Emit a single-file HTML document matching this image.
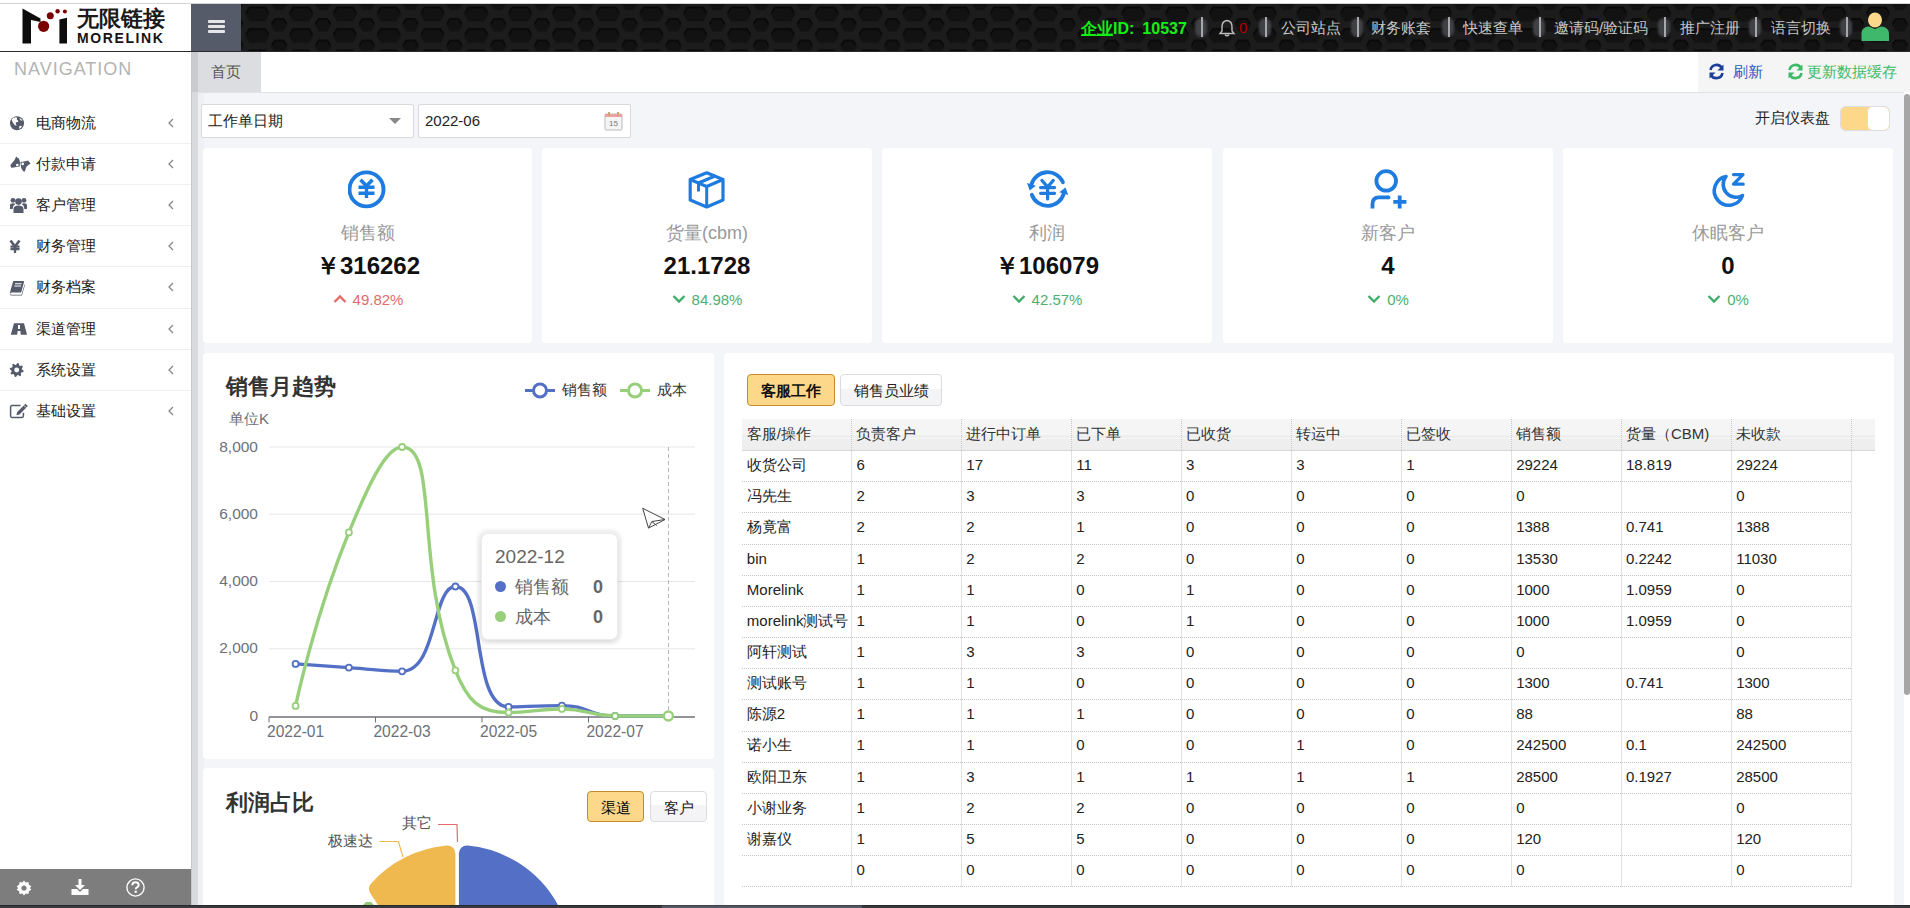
<!DOCTYPE html>
<html><head><meta charset="utf-8">
<style>
*{margin:0;padding:0;box-sizing:border-box}
html,body{width:1910px;height:908px;overflow:hidden;background:#fff;font-family:"Liberation Sans",sans-serif;color:#333}
.a{position:absolute}
#topline{left:0;top:3px;width:1910px;height:1px;background:#d4d4d4}
#header{left:0;top:4px;width:1910px;height:47px;background:#1b1b1b}
#hline{left:0;top:51px;width:1910px;height:1px;background:#2a2a2a}
#logo{left:0;top:4px;width:191px;height:47px;background:#fff}
#burger{left:191px;top:4px;width:50px;height:47px;background:#555b69}
.bar{position:absolute;left:17px;width:17px;height:3px;background:#e6e6e6;border-radius:1px}
#side{left:0;top:52px;width:191px;height:853px;background:#fff}
#nav{left:14px;top:59px;font-size:18px;color:#b4b4b4;letter-spacing:1px}
.mi{position:absolute;left:0;width:191px;height:41px}
.mi .t{position:absolute;left:36px;top:12px;font-size:15px;color:#222;line-height:17px}
.mi .ch{position:absolute;left:167px;top:12.7px}
.mi .ic{position:absolute;left:10px;top:13px}
.div{position:absolute;left:0;width:191px;height:1px;background:#edeff3}
#sfoot{left:0;top:869px;width:191px;height:36px;background:#7d7d7d}
#bottombar{left:0;top:905px;width:1910px;height:3px;background:#37393e}
#sstrip{left:191px;top:52px;width:7px;height:853px;background:#d9dadd}
#sstrip2{left:191px;top:52px;width:1px;height:853px;background:#c6c7ca}
#content{left:198px;top:93px;width:1706px;height:812px;background:#f4f5f9}
#cstrip{left:198px;top:93px;width:6px;height:812px;background:#eef0f3}
#tabbar{left:198px;top:52px;width:1712px;height:41px;background:#fff}
#tabline{left:198px;top:92px;width:1706px;height:1px;background:#e1e2e5}
#tab1{left:198px;top:52px;width:63px;height:40px;background:#dcdde0}
#tabright{left:1698px;top:52px;width:212px;height:40px;background:#f5f5f5}
.card{position:absolute;background:#fff;border-radius:4px}
.sc{top:148px;width:330px;height:195px}
.sc .ico{position:absolute;left:145px;top:21px;width:40px;height:40px}
.sc .lbl{position:absolute;left:0;width:330px;top:74px;text-align:center;font-size:18px;color:#999;line-height:22px}
.sc .val{position:absolute;left:0;width:330px;top:104px;text-align:center;font-size:24px;font-weight:bold;color:#111;line-height:28px}
.sc .chg{position:absolute;left:0;width:330px;top:143px;text-align:center;font-size:15px;line-height:17px}
.up{color:#e36b6b}.dn{color:#4caf72}
#scroll{left:1904px;top:94px;width:6px;height:601px;background:#a6a6a6;border-radius:6px}
</style></head><body>
<div class="a" id="topline"></div>
<div class="a" id="header"></div>
<svg class="a" style="left:0;top:4px" width="1910" height="47"><defs><pattern id="hx" patternUnits="userSpaceOnUse" x="-27.40" y="-0.65" width="43.8" height="21.5"><rect width="43.8" height="21.5" fill="#1c1c1c"/><path d="M13.9 3.5 L29.9 3.5 L34.2 10.8 L29.9 18.0 L13.9 18.0 L9.6 10.8 Z M-4.4 -6.7 L4.4 -6.7 L8.4 0.0 L4.4 6.7 L-4.4 6.7 L-8.4 0.0 Z M-4.4 14.8 L4.4 14.8 L8.4 21.5 L4.4 28.2 L-4.4 28.2 L-8.4 21.5 Z M39.4 -6.7 L48.2 -6.7 L52.2 0.0 L48.2 6.7 L39.4 6.7 L35.4 0.0 Z M39.4 14.8 L48.2 14.8 L52.2 21.5 L48.2 28.2 L39.4 28.2 L35.4 21.5 Z" fill="#121212"/><path d="M10.6 9.8 L13.9 4.3 L29.9 4.3 L33.2 9.8 M-7.4 -1.0 L-4.4 -5.9 L4.4 -5.9 L7.4 -1.0 M-7.4 20.5 L-4.4 15.6 L4.4 15.6 L7.4 20.5 M36.4 -1.0 L39.4 -5.9 L48.2 -5.9 L51.2 -1.0 M36.4 20.5 L39.4 15.6 L48.2 15.6 L51.2 20.5" fill="none" stroke="#070707" stroke-width="1.6"/></pattern></defs><rect width="1910" height="47" fill="url(#hx)"/></svg>
<div class="a" id="hline"></div>
<div class="a" style="left:1081px;top:19px;font-size:16px;line-height:20px;font-weight:bold;color:#14f014;white-space:nowrap"><span style="text-decoration:underline">企业</span>ID:<span style="margin-left:8px">10537</span></div>
<div class="a" style="left:1195px;top:18px;width:12px;height:19px;border-radius:6px;background:#404146;filter:blur(1px)"></div><div class="a" style="left:1201px;top:17px;width:2px;height:20px;background:#a8a8a8"></div>
<div class="a" style="left:1259px;top:18px;width:12px;height:19px;border-radius:6px;background:#404146;filter:blur(1px)"></div><div class="a" style="left:1265px;top:17px;width:2px;height:20px;background:#a8a8a8"></div>
<div class="a" style="left:1351px;top:18px;width:12px;height:19px;border-radius:6px;background:#404146;filter:blur(1px)"></div><div class="a" style="left:1357px;top:17px;width:2px;height:20px;background:#a8a8a8"></div>
<div class="a" style="left:1442px;top:18px;width:12px;height:19px;border-radius:6px;background:#404146;filter:blur(1px)"></div><div class="a" style="left:1448px;top:17px;width:2px;height:20px;background:#a8a8a8"></div>
<div class="a" style="left:1533px;top:18px;width:12px;height:19px;border-radius:6px;background:#404146;filter:blur(1px)"></div><div class="a" style="left:1539px;top:17px;width:2px;height:20px;background:#a8a8a8"></div>
<div class="a" style="left:1658px;top:18px;width:12px;height:19px;border-radius:6px;background:#404146;filter:blur(1px)"></div><div class="a" style="left:1664px;top:17px;width:2px;height:20px;background:#a8a8a8"></div>
<div class="a" style="left:1749px;top:18px;width:12px;height:19px;border-radius:6px;background:#404146;filter:blur(1px)"></div><div class="a" style="left:1755px;top:17px;width:2px;height:20px;background:#a8a8a8"></div>
<div class="a" style="left:1840px;top:18px;width:12px;height:19px;border-radius:6px;background:#404146;filter:blur(1px)"></div><div class="a" style="left:1846px;top:17px;width:2px;height:20px;background:#a8a8a8"></div>
<svg class="a" style="left:1218px;top:19px" width="18" height="18" viewBox="0 0 18 18"><path d="M9 1.5 Q4 2 4 8 L4 12 L2 14.5 L16 14.5 L14 12 L14 8 Q14 2 9 1.5 Z" fill="none" stroke="#bbb" stroke-width="1.4"/><path d="M7 15.5 Q9 18 11 15.5" fill="none" stroke="#bbb" stroke-width="1.4"/></svg>
<div class="a" style="left:1239px;top:19px;font-size:15px;line-height:18px;color:#b00000">0</div>
<div class="a" style="left:1281px;top:19px;font-size:15px;line-height:18px;color:#c6c6c6;white-space:nowrap">公司站点</div>
<div class="a" style="left:1371px;top:19px;font-size:15px;line-height:18px;color:#c6c6c6;white-space:nowrap">财务账套</div>
<div class="a" style="left:1463px;top:19px;font-size:15px;line-height:18px;color:#c6c6c6;white-space:nowrap">快速查单</div>
<div class="a" style="left:1554px;top:19px;font-size:15px;line-height:18px;color:#c6c6c6;white-space:nowrap">邀请码/验证码</div>
<div class="a" style="left:1680px;top:19px;font-size:15px;line-height:18px;color:#c6c6c6;white-space:nowrap">推广注册</div>
<div class="a" style="left:1771px;top:19px;font-size:15px;line-height:18px;color:#c6c6c6;white-space:nowrap">语言切换</div>
<svg class="a" style="left:1861px;top:10px" width="29" height="32" viewBox="0 0 29 32"><path d="M8 5 Q14 0 20 5 L20 6 L8 6 Z" fill="#222"/><ellipse cx="14" cy="10" rx="7" ry="7.5" fill="#fcd98a"/><path d="M0.5 31 L0.5 23 Q1 17 8 16.5 L14 19 L20 16.5 Q27.5 17 28 23 L28 31 Z" fill="#3fb86b"/></svg>

<div class="a" id="logo"></div>
<div class="a" style="left:0;top:0;width:191px;height:52px">
<svg width="191" height="52" viewBox="0 0 191 52" style="position:absolute;left:0;top:0">
<path d="M22.5 8.5 L40.5 18.5 L40.5 22 L31 20 L31 43.6 L22.5 43.6 Z" fill="#0d0d0d"/>
<circle cx="43.6" cy="26.3" r="5.6" fill="#7a0000"/>
<circle cx="50.3" cy="15.8" r="3.5" fill="#7a0000"/>
<circle cx="57.6" cy="11.2" r="2.2" fill="#7a0000"/>
<circle cx="64.9" cy="11.6" r="2" fill="#7a0000"/>
<path d="M59.4 19.5 L67 17.8 L67 43.6 L59.4 43.6 Z" fill="#0d0d0d"/>
</svg>
<div class="a" style="left:77px;top:6px;font-size:22px;line-height:26px;font-weight:bold;color:#1a1a1a;letter-spacing:0px;white-space:nowrap">无限链接</div>
<div class="a" style="left:77px;top:31px;font-size:14px;line-height:15px;font-weight:bold;color:#151515;letter-spacing:1.6px;white-space:nowrap">MORELINK</div>
</div>

<div class="a" id="burger"><div class="bar" style="top:16px"></div><div class="bar" style="top:21px"></div><div class="bar" style="top:26px"></div></div>
<div class="a" id="side"></div>
<div class="a" id="nav">NAVIGATION</div>
<!--SIDE-->
<div class="mi" style="top:102px"><div class="t">电商物流</div><div class="ch"><svg width="8" height="12" viewBox="0 0 8 12"><path d="M6 2 L2 6 L6 10" fill="none" stroke="#888" stroke-width="1.3"/></svg></div></div>
<svg class="a" style="left:9px;top:115px" width="16" height="16" viewBox="0 0 16 16"><circle cx="8" cy="8.2" r="7" fill="#555b6a"/><path d="M2.6 4.6 Q4.5 2 7.5 2.2 Q8.5 3.5 7.8 4.8 Q9.5 5.2 9.3 6.8 Q8 7.5 6.8 7.2 Q6.5 9 7.6 10.5 Q6 10.8 5 9.2 Q3.3 7.2 2.6 4.6 Z M10.5 3 Q12.5 3.8 13.5 5.8 Q12 6 11.2 4.8 Z M10.5 11 Q12 10.5 13 11.2 Q12 13.2 10 13.8 Q10.2 12.5 10.5 11 Z" fill="#fff"/></svg>
<div class="mi" style="top:143px"><div class="t">付款申请</div><div class="ch"><svg width="8" height="12" viewBox="0 0 8 12"><path d="M6 2 L2 6 L6 10" fill="none" stroke="#888" stroke-width="1.3"/></svg></div></div>
<svg class="a" style="left:10px;top:153px" width="21" height="20" viewBox="0 0 21 20"><path d="M0.4 12 L2.5 9.5 L4.3 7.4 L6.2 3.6 L7.5 4.8 L8.9 5.5 L10 9 L9.7 13.6 L6 14 L3.9 14.4 L1.2 14.8 Z" fill="#555b6a"/><path d="M10.4 9 L14 8.6 L18.1 7.4 L20.5 10.5 L16.6 13.6 L15.6 16 L15 18.6 L13.1 18.2 L11.2 15.1 Z" fill="#555b6a"/><circle cx="7.3" cy="12" r="1.3" fill="#fff"/><circle cx="12.7" cy="10.9" r="1.3" fill="#fff"/></svg>
<div class="mi" style="top:184px"><div class="t">客户管理</div><div class="ch"><svg width="8" height="12" viewBox="0 0 8 12"><path d="M6 2 L2 6 L6 10" fill="none" stroke="#888" stroke-width="1.3"/></svg></div></div>
<svg class="a" style="left:10px;top:197px" width="18" height="17" viewBox="0 0 18 17"><circle cx="8.5" cy="4.6" r="3.3" fill="#555b6a"/><circle cx="3" cy="3.3" r="2.4" fill="#555b6a"/><circle cx="14" cy="3.3" r="2.4" fill="#555b6a"/><path d="M3.5 16 L3.5 12 Q3.5 8.5 8.5 8.5 Q13.5 8.5 13.5 12 L13.5 16 Z" fill="#555b6a"/><path d="M0 12 L0 8.5 Q0 6.3 3 6.3 Q4.6 6.3 5.2 7.2 Q2.8 8.5 2.8 11 L2.8 12 Z M17 12 L17 8.5 Q17 6.3 14 6.3 Q12.4 6.3 11.8 7.2 Q14.2 8.5 14.2 11 L14.2 12 Z" fill="#555b6a"/></svg>
<div class="mi" style="top:225px"><div class="t">财务管理</div><div class="ch"><svg width="8" height="12" viewBox="0 0 8 12"><path d="M6 2 L2 6 L6 10" fill="none" stroke="#888" stroke-width="1.3"/></svg></div></div>
<svg class="a" style="left:9px;top:239px" width="12" height="15" viewBox="0 0 12 15"><path d="M1.5 1.5 L6 7.5 L10.5 1.5" fill="none" stroke="#555b6a" stroke-width="2.6"/><path d="M1.5 7.6 L10.5 7.6 M1.5 10.2 L10.5 10.2 M6 7 L6 14" stroke="#555b6a" stroke-width="2.3"/></svg>
<div class="mi" style="top:266px"><div class="t">财务档案</div><div class="ch"><svg width="8" height="12" viewBox="0 0 8 12"><path d="M6 2 L2 6 L6 10" fill="none" stroke="#888" stroke-width="1.3"/></svg></div></div>
<svg class="a" style="left:9px;top:280px" width="17" height="16" viewBox="0 0 17 16"><path d="M4.2 1 L14.5 1 Q15.2 1 15 2 L12.2 12.5 L2.5 12.5 Q1 12.5 1.2 14 Q1.4 14.8 2.5 14.8 L12.5 14.8 L15.5 4.5 L16 4.8 L13 15.2 Q12.8 15.6 12.2 15.6 L2.3 15.6 Q0.6 15.5 0.8 13 Z" fill="#555b6a"/><path d="M6 3.8 L12.5 3.8 M5.4 6 L12 6" stroke="#fff" stroke-width="1.1"/></svg>
<div class="mi" style="top:308px"><div class="t">渠道管理</div><div class="ch"><svg width="8" height="12" viewBox="0 0 8 12"><path d="M6 2 L2 6 L6 10" fill="none" stroke="#888" stroke-width="1.3"/></svg></div></div>
<svg class="a" style="left:10px;top:323px" width="18" height="13" viewBox="0 0 18 13"><path d="M4 0.3 L14 0.3 L17 11.8 L10.8 11.8 L10.4 8 L7.6 8 L7.2 11.8 L0.8 11.8 Z" fill="#555b6a"/><rect x="8" y="2" width="2" height="4" fill="#fff"/></svg>
<div class="mi" style="top:349px"><div class="t">系统设置</div><div class="ch"><svg width="8" height="12" viewBox="0 0 8 12"><path d="M6 2 L2 6 L6 10" fill="none" stroke="#888" stroke-width="1.3"/></svg></div></div>
<svg class="a" style="left:9px;top:362px" width="16" height="16" viewBox="0 0 16 16"><path d="M8.39 1.03 L9.73 1.30 L10.20 3.33 L11.06 3.90 L13.11 3.56 L13.87 4.70 L12.77 6.46 L12.97 7.48 L14.67 8.69 L14.40 10.03 L12.37 10.50 L11.80 11.36 L12.14 13.41 L11.00 14.17 L9.24 13.07 L8.22 13.27 L7.01 14.97 L5.67 14.70 L5.20 12.67 L4.34 12.10 L2.29 12.44 L1.53 11.30 L2.63 9.54 L2.43 8.52 L0.73 7.31 L1.00 5.97 L3.03 5.50 L3.60 4.64 L3.26 2.59 L4.40 1.83 L6.16 2.93 L7.18 2.73 Z" fill="#555b6a"/><circle cx="7.7" cy="8" r="2.4" fill="#fff"/></svg>
<div class="mi" style="top:390px"><div class="t">基础设置</div><div class="ch"><svg width="8" height="12" viewBox="0 0 8 12"><path d="M6 2 L2 6 L6 10" fill="none" stroke="#888" stroke-width="1.3"/></svg></div></div>
<svg class="a" style="left:9px;top:403px" width="20" height="16" viewBox="0 0 20 16"><path d="M11.5 2.6 L3 2.6 Q1.6 2.6 1.6 4 L1.6 13 Q1.6 14.4 3 14.4 L13 14.4 Q14.4 14.4 14.4 13 L14.4 9.8" fill="none" stroke="#555b6a" stroke-width="1.5"/><path d="M16.5 0.8 L18.8 3.1 L10.5 11.4 L7.4 12.2 L8.2 9.1 Z" fill="#555b6a"/><path d="M15 2.5 L17 4.5" stroke="#fff" stroke-width="0.8"/></svg>
<div class="div" style="top:143px"></div>
<div class="div" style="top:184px"></div>
<div class="div" style="top:225px"></div>
<div class="div" style="top:266px"></div>
<div class="div" style="top:308px"></div>
<div class="div" style="top:349px"></div>
<div class="div" style="top:390px"></div>
<!--/SIDE-->

<div class="a" id="sstrip"></div><div class="a" style="left:191px;top:52px;width:7px;height:40px;background:#cacbce"></div><div class="a" id="sstrip2"></div>
<div class="a" id="tabbar"></div>
<div class="a" id="tab1"></div>
<div class="a" id="tabright"></div>
<div class="a" id="tabline"></div>
<div class="a" id="content"></div>
<div class="a" id="cstrip"></div>
<div class="a" id="sfoot"></div>
<div class="a" style="left:16px;top:880px"><svg width="16" height="16" viewBox="0 0 16 16"><path d="M8 0.5 L9.7 2.6 L12.4 2.1 L12.9 4.8 L15.3 6.2 L13.9 8 L15.3 9.8 L12.9 11.2 L12.4 13.9 L9.7 13.4 L8 15.5 L6.3 13.4 L3.6 13.9 L3.1 11.2 L0.7 9.8 L2.1 8 L0.7 6.2 L3.1 4.8 L3.6 2.1 L6.3 2.6 Z" fill="#fff"/><circle cx="8" cy="8" r="2.6" fill="#7d7d7d"/></svg></div>
<div class="a" style="left:71px;top:879px"><svg width="18" height="17" viewBox="0 0 18 17"><path d="M7.5 0 L10.5 0 L10.5 6 L14 6 L9 11 L4 6 L7.5 6 Z" fill="#fff"/><path d="M0.5 10 L6 10 L9 13 L12 10 L17.5 10 L17.5 16 L0.5 16 Z" fill="#fff"/></svg></div>
<div class="a" style="left:126px;top:878px"><svg width="19" height="19" viewBox="0 0 19 19"><circle cx="9.5" cy="9.5" r="8.6" fill="none" stroke="#fff" stroke-width="1.4"/><path d="M6.3 7.3 Q6.3 4.2 9.5 4.2 Q12.7 4.2 12.7 7 Q12.7 8.6 10.6 9.6 Q9.8 10 9.8 11.3" fill="none" stroke="#fff" stroke-width="2"/><rect x="8.6" y="12.6" width="2.2" height="2.2" fill="#fff"/></svg></div>

<!--TOP-->
<div class="a" style="left:211px;top:63px;font-size:15px;line-height:18px;color:#555">首页</div>
<svg class="a" style="left:1708px;top:63px;transform:scaleX(-1)" width="17" height="17" viewBox="0 0 17 17"><path d="M14.5 7 A6.2 6.2 0 0 0 3 5" fill="none" stroke="#1e3e9a" stroke-width="2.6"/><path d="M1.5 1.5 L1.5 7.5 L7.5 7.5 Z" fill="#1e3e9a"/><path d="M2.5 10 A6.2 6.2 0 0 0 14 12" fill="none" stroke="#1e3e9a" stroke-width="2.6"/><path d="M15.5 15.5 L15.5 9.5 L9.5 9.5 Z" fill="#1e3e9a"/></svg>
<div class="a" style="left:1733px;top:63px;font-size:15px;line-height:18px;color:#2a55c8">刷新</div>
<svg class="a" style="left:1787px;top:63px;transform:scaleX(-1)" width="17" height="17" viewBox="0 0 17 17"><path d="M14.5 7 A6.2 6.2 0 0 0 3 5" fill="none" stroke="#3dbb67" stroke-width="2.6"/><path d="M1.5 1.5 L1.5 7.5 L7.5 7.5 Z" fill="#3dbb67"/><path d="M2.5 10 A6.2 6.2 0 0 0 14 12" fill="none" stroke="#3dbb67" stroke-width="2.6"/><path d="M15.5 15.5 L15.5 9.5 L9.5 9.5 Z" fill="#3dbb67"/></svg>
<div class="a" style="left:1807px;top:63px;font-size:15px;line-height:18px;color:#3dbb67;white-space:nowrap">更新数据缓存</div>
<div class="a" style="left:201px;top:104px;width:213px;height:34px;background:#fff;border:1px solid #d9d9d9;border-radius:2px"></div>
<div class="a" style="left:208px;top:111px;font-size:15px;line-height:19px;color:#222">工作单日期</div>
<svg class="a" style="left:389px;top:118px" width="12" height="7" viewBox="0 0 12 7"><path d="M0 0 L12 0 L6 6 Z" fill="#888"/></svg>
<div class="a" style="left:418px;top:104px;width:213px;height:34px;background:#fff;border:1px solid #d9d9d9;border-radius:2px"></div>
<div class="a" style="left:425px;top:111px;font-size:15px;line-height:19px;color:#222">2022-06</div>
<svg class="a" style="left:604px;top:111px" width="19" height="20" viewBox="0 0 19 20"><rect x="1" y="3" width="17" height="16" rx="1" fill="#f4f4f4" stroke="#bbb"/><rect x="1" y="3" width="17" height="3" fill="#f0a0a0"/><rect x="4" y="1" width="2" height="4" fill="#c9a97a"/><rect x="13" y="1" width="2" height="4" fill="#c9a97a"/><text x="5" y="15" font-size="8" fill="#777" font-family="Liberation Sans">15</text></svg>
<div class="a" style="left:1755px;top:109px;font-size:15px;line-height:18px;color:#222;white-space:nowrap">开启仪表盘</div>
<div class="a" style="left:1840px;top:106px;width:50px;height:25px;background:#fdd88a;border:1px solid #ddd;border-radius:6px;overflow:hidden"><div style="position:absolute;right:0;top:0;width:22px;height:23px;background:#fff;border-radius:5px;border-left:1px solid #ddd"></div></div>
<!--CARDS-->
<div class="card sc" style="left:203px;width:329px"><div class="ico"><svg width="40" height="40" viewBox="0 0 40 40"><circle cx="18.5" cy="20.4" r="17" fill="none" stroke="#1e7be0" stroke-width="3.9"/><path d="M12.5 10.7 L18.5 17 L24.5 10.7" fill="none" stroke="#1e7be0" stroke-width="3.6"/><path d="M10.5 18.3 L26.5 18.3 M10.5 24.3 L26.5 24.3 M18.5 17 L18.5 29" stroke="#1e7be0" stroke-width="3.4"/></svg></div><div class="lbl">销售额</div><div class="val">￥316262</div><div class="chg up"><svg width="14" height="10" viewBox="0 0 14 10" style="vertical-align:1px;margin-right:6px"><path d="M1.5 8 L7 2.5 L12.5 8" fill="none" stroke="#e36b6b" stroke-width="2.4"/></svg>49.82%</div></div>
<div class="card sc" style="left:542px"><div class="ico"><svg width="40" height="40" viewBox="0 0 40 40"><path d="M19.7 3.8 L36 10.5 L36 31 L19.7 38 L3.2 31 L3.2 10.5 Z" fill="none" stroke="#1e7be0" stroke-width="3.2" stroke-linejoin="round"/><path d="M3.2 10.5 L19.7 17.5 L36 10.5 M19.7 17.5 L19.7 38 M28 7 L11.5 14 L11.5 22.5" fill="none" stroke="#1e7be0" stroke-width="3" stroke-linejoin="round"/></svg></div><div class="lbl">货量(cbm)</div><div class="val">21.1728</div><div class="chg dn"><svg width="14" height="10" viewBox="0 0 14 10" style="vertical-align:1px;margin-right:6px"><path d="M1.5 2 L7 7.5 L12.5 2" fill="none" stroke="#3fae6a" stroke-width="2.4"/></svg>84.98%</div></div>
<div class="card sc" style="left:882px"><div class="ico"><svg width="44" height="40" viewBox="0 0 44 40" style="overflow:visible"><path d="M35.95 13.17 A16.8 16.8 0 0 0 4.45 15.37" fill="none" stroke="#1e7be0" stroke-width="3.8" stroke-linecap="round"/><path d="M4.81 25.75 A16.8 16.8 0 0 0 36.75 24.63" fill="none" stroke="#1e7be0" stroke-width="3.8" stroke-linecap="round"/><path d="M0.03 14.10 L8.87 16.64 L2.66 21.62 Z M41.17 25.90 L32.33 23.36 L38.54 18.38 Z" fill="#1e7be0"/><path d="M15 11.5 L20.6 18 L26.2 11.5" fill="none" stroke="#1e7be0" stroke-width="3.4" stroke-linecap="round"/><path d="M13.6 18.6 L27.6 18.6 M13.6 24.3 L27.6 24.3 M20.6 18 L20.6 30" stroke="#1e7be0" stroke-width="3.2" stroke-linecap="round"/></svg></div><div class="lbl">利润</div><div class="val">￥106079</div><div class="chg dn"><svg width="14" height="10" viewBox="0 0 14 10" style="vertical-align:1px;margin-right:6px"><path d="M1.5 2 L7 7.5 L12.5 2" fill="none" stroke="#3fae6a" stroke-width="2.4"/></svg>42.57%</div></div>
<div class="card sc" style="left:1223px"><div class="ico"><svg width="40" height="40" viewBox="0 0 40 40"><circle cx="18.2" cy="11.9" r="9.8" fill="none" stroke="#1e7be0" stroke-width="3.8"/><path d="M4.5 39.5 L4.5 35 Q4.5 28.4 11 28.4 L20.5 28.4" fill="none" stroke="#1e7be0" stroke-width="3.8" stroke-linecap="butt"/><circle cx="20.5" cy="28.4" r="1.9" fill="#1e7be0"/><path d="M31.7 26.5 L31.7 39.5 M25.3 32.8 L38.4 32.8" stroke="#1e7be0" stroke-width="3.8"/></svg></div><div class="lbl">新客户</div><div class="val">4</div><div class="chg dn"><svg width="14" height="10" viewBox="0 0 14 10" style="vertical-align:1px;margin-right:6px"><path d="M1.5 2 L7 7.5 L12.5 2" fill="none" stroke="#3fae6a" stroke-width="2.4"/></svg>0%</div></div>
<div class="card sc" style="left:1563px"><div class="ico"><svg width="40" height="40" viewBox="0 0 40 40"><path d="M18 7.5 A14.5 14.5 0 1 0 34.5 26.5 A12.8 12.8 0 0 1 18 7.5 Z" fill="none" stroke="#1e7be0" stroke-width="3.6" stroke-linejoin="round"/><path d="M25.5 5.6 L35 5.6 L25.5 15.2 L35.2 15.2" fill="none" stroke="#1e7be0" stroke-width="3.3" stroke-linejoin="round" stroke-linecap="round"/></svg></div><div class="lbl">休眠客户</div><div class="val">0</div><div class="chg dn"><svg width="14" height="10" viewBox="0 0 14 10" style="vertical-align:1px;margin-right:6px"><path d="M1.5 2 L7 7.5 L12.5 2" fill="none" stroke="#3fae6a" stroke-width="2.4"/></svg>0%</div></div>
<!--/CARDS-->

<div class="card" style="left:203px;top:353px;width:511px;height:406px"></div>
<!--CHART-->
<svg class="a" style="left:0;top:0" width="1910" height="908" viewBox="0 0 1910 908"><line x1="269" y1="648.8" x2="695" y2="648.8" stroke="#e6e6e6" stroke-width="1"/><line x1="269" y1="581.5" x2="695" y2="581.5" stroke="#e6e6e6" stroke-width="1"/><line x1="269" y1="514.2" x2="695" y2="514.2" stroke="#e6e6e6" stroke-width="1"/><line x1="269" y1="447.0" x2="695" y2="447.0" stroke="#e6e6e6" stroke-width="1"/><line x1="269" y1="717" x2="695" y2="717" stroke="#6e7079" stroke-width="1.3"/><line x1="269" y1="717" x2="269" y2="722.5" stroke="#6e7079" stroke-width="1"/><line x1="375.5" y1="717" x2="375.5" y2="722.5" stroke="#6e7079" stroke-width="1"/><line x1="482" y1="717" x2="482" y2="722.5" stroke="#6e7079" stroke-width="1"/><line x1="588.5" y1="717" x2="588.5" y2="722.5" stroke="#6e7079" stroke-width="1"/><line x1="668.5" y1="447" x2="668.5" y2="716" stroke="#b8b8b8" stroke-width="1" stroke-dasharray="4 3"/><path d="M295.62 663.88 C295.62 663.88 322.25 665.73 348.88 667.58 C375.50 669.43 383.60 671.28 402.12 671.28 C436.85 671.28 432.38 586.54 455.38 586.54 C485.63 586.54 470.72 706.92 508.62 706.92 C523.97 706.92 535.50 705.58 561.88 705.58 C588.75 705.58 588.25 716.00 615.12 716.00 C641.50 716.00 668.38 716.00 668.38 716.00" fill="none" stroke="#5470c6" stroke-width="3.4"/><path d="M295.62 705.91 C295.62 705.91 314.62 615.68 348.88 532.41 C367.87 486.23 385.89 447.00 402.12 447.00 C439.14 447.00 414.30 567.82 455.38 670.27 C467.55 700.64 478.78 712.64 508.62 712.64 C532.03 712.64 535.33 708.94 561.88 708.94 C588.58 708.94 588.38 716.00 615.12 716.00 C641.63 716.00 668.38 716.00 668.38 716.00" fill="none" stroke="#98cf7b" stroke-width="3.4"/><circle cx="295.6" cy="663.9" r="3" fill="#fff" stroke="#5470c6" stroke-width="1.8"/><circle cx="348.9" cy="667.6" r="3" fill="#fff" stroke="#5470c6" stroke-width="1.8"/><circle cx="402.1" cy="671.3" r="3" fill="#fff" stroke="#5470c6" stroke-width="1.8"/><circle cx="455.4" cy="586.5" r="3" fill="#fff" stroke="#5470c6" stroke-width="1.8"/><circle cx="508.6" cy="706.9" r="3" fill="#fff" stroke="#5470c6" stroke-width="1.8"/><circle cx="561.9" cy="705.6" r="3" fill="#fff" stroke="#5470c6" stroke-width="1.8"/><circle cx="615.1" cy="716.0" r="3" fill="#fff" stroke="#5470c6" stroke-width="1.8"/><circle cx="668.4" cy="716.0" r="3" fill="#fff" stroke="#5470c6" stroke-width="1.8"/><circle cx="295.6" cy="705.9" r="3" fill="#fff" stroke="#98cf7b" stroke-width="1.8"/><circle cx="348.9" cy="532.4" r="3" fill="#fff" stroke="#98cf7b" stroke-width="1.8"/><circle cx="402.1" cy="447.0" r="3" fill="#fff" stroke="#98cf7b" stroke-width="1.8"/><circle cx="455.4" cy="670.3" r="3" fill="#fff" stroke="#98cf7b" stroke-width="1.8"/><circle cx="508.6" cy="712.6" r="3" fill="#fff" stroke="#98cf7b" stroke-width="1.8"/><circle cx="561.9" cy="708.9" r="3" fill="#fff" stroke="#98cf7b" stroke-width="1.8"/><circle cx="615.1" cy="716.0" r="3" fill="#fff" stroke="#98cf7b" stroke-width="1.8"/><circle cx="668.4" cy="716.0" r="3" fill="#fff" stroke="#98cf7b" stroke-width="1.8"/><line x1="525" y1="390.5" x2="555" y2="390.5" stroke="#5470c6" stroke-width="3"/><circle cx="540" cy="390.5" r="6.5" fill="#fff" stroke="#5470c6" stroke-width="3"/><line x1="620" y1="390.5" x2="650" y2="390.5" stroke="#98cf7b" stroke-width="3"/><circle cx="635" cy="390.5" r="6.5" fill="#fff" stroke="#98cf7b" stroke-width="3"/><circle cx="668.4" cy="716" r="4.5" fill="#fff" stroke="#98cf7b" stroke-width="2.4"/><path d="M642.7 508.3 L665 519.5 L648.5 528.1 Z M648.5 528.1 L651.9 521.5 L665 519.5 M651.9 521.5 L656.7 525.6" fill="#fff" stroke="#444" stroke-width="1" stroke-linejoin="round"/></svg>
<div class="a" style="left:226px;top:373px;font-size:22.4px;line-height:28px;font-weight:bold;color:#333;white-space:nowrap">销售月趋势</div><div class="a" style="left:562px;top:381px;font-size:15px;line-height:18px;color:#333">销售额</div><div class="a" style="left:657px;top:381px;font-size:15px;line-height:18px;color:#333">成本</div><div class="a" style="left:229px;top:410px;font-size:15px;line-height:18px;color:#6e7079">单位K</div><div class="a" style="left:200px;width:58px;text-align:right;top:438px;font-size:15.5px;line-height:18px;color:#6e7079">8,000</div><div class="a" style="left:200px;width:58px;text-align:right;top:505px;font-size:15.5px;line-height:18px;color:#6e7079">6,000</div><div class="a" style="left:200px;width:58px;text-align:right;top:572px;font-size:15.5px;line-height:18px;color:#6e7079">4,000</div><div class="a" style="left:200px;width:58px;text-align:right;top:639px;font-size:15.5px;line-height:18px;color:#6e7079">2,000</div><div class="a" style="left:200px;width:58px;text-align:right;top:707px;font-size:15.5px;line-height:18px;color:#6e7079">0</div><div class="a" style="left:255.6px;width:80px;text-align:center;top:723px;font-size:15.6px;line-height:18px;color:#6e7079">2022-01</div><div class="a" style="left:362.0px;width:80px;text-align:center;top:723px;font-size:15.6px;line-height:18px;color:#6e7079">2022-03</div><div class="a" style="left:468.6px;width:80px;text-align:center;top:723px;font-size:15.6px;line-height:18px;color:#6e7079">2022-05</div><div class="a" style="left:575.0px;width:80px;text-align:center;top:723px;font-size:15.6px;line-height:18px;color:#6e7079">2022-07</div><div class="a" style="left:482px;top:534px;width:135px;height:105px;background:#fff;border-radius:6px;box-shadow:0 0 0 1px #ececec,0 0 3px 5px rgba(0,0,0,0.05),0 2px 6px rgba(0,0,0,0.12)"></div><div class="a" style="left:495px;top:545px;font-size:19px;line-height:23px;color:#666">2022-12</div><div class="a" style="left:495px;top:581px;width:11px;height:11px;border-radius:50%;background:#5470c6"></div><div class="a" style="left:495px;top:611px;width:11px;height:11px;border-radius:50%;background:#98cf7b"></div><div class="a" style="left:515px;top:576px;font-size:18px;line-height:22px;color:#666">销售额</div><div class="a" style="left:515px;top:606px;font-size:18px;line-height:22px;color:#666">成本</div><div class="a" style="left:593px;top:576px;font-size:18px;line-height:22px;font-weight:bold;color:#666">0</div><div class="a" style="left:593px;top:606px;font-size:18px;line-height:22px;font-weight:bold;color:#666">0</div>
<!--/CHART-->
<div class="card" style="left:203px;top:768px;width:511px;height:200px"></div>
<!--PIE-->
<svg class="a" style="left:0;top:0" width="1910" height="905" viewBox="0 0 1910 905"><path d="M466.90 853.46 A107 107 0 0 1 549.66 1013.50 L466.90 980 Z" fill="#5470c6" stroke="#5470c6" stroke-width="16" stroke-linejoin="round"/><path d="M447.40 853.43 A107 107 0 0 0 377.04 888.90 L447.40 997.08 Z" fill="#f0b94f" stroke="#f0b94f" stroke-width="16" stroke-linejoin="round"/><path d="M363 905 L366 902 L371 902 L374 905 Z" fill="#91cc75"/><path d="M379.4 841.5 L398.4 841.5 L403 857" fill="none" stroke="#f0b94f" stroke-width="1.2"/><path d="M438 824.5 L457 824.5 L457.5 842" fill="none" stroke="#e86a6a" stroke-width="1.2"/></svg>
<div class="a" style="left:226px;top:789px;font-size:22px;line-height:28px;font-weight:bold;color:#333;white-space:nowrap">利润占比</div><div class="a" style="left:587px;top:791px;width:57px;height:31px;background:#fdd88a;border:1px solid #c58a2a;border-radius:4px;text-align:center;font-size:15px;line-height:31px;color:#000">渠道</div><div class="a" style="left:650px;top:791px;width:57px;height:31px;background:linear-gradient(#fff 0,#fff 45%,#f4f4f6 45%);border:1px solid #dcdcdc;border-radius:4px;text-align:center;font-size:15px;line-height:31px;color:#222">客户</div><div class="a" style="left:328px;top:831.5px;font-size:15px;line-height:18px;color:#555">极速达</div><div class="a" style="left:402px;top:814px;font-size:15px;line-height:18px;color:#555">其它</div>
<!--/PIE-->
<div class="card" style="left:724px;top:353px;width:1170px;height:600px"></div>
<!--TABLE-->
<div class="a" style="left:747px;top:374px;width:88px;height:32px;background:#fdd88a;border:1px solid #c58a2a;border-radius:4px;text-align:center;font-size:15px;line-height:31px;font-weight:bold;color:#111">客服工作</div><div class="a" style="left:840px;top:374px;width:102px;height:32px;background:linear-gradient(#fff 0,#fff 45%,#f4f4f6 45%);border:1px solid #dcdcdc;border-radius:4px;text-align:center;font-size:15px;line-height:31px;color:#222">销售员业绩</div><div class="a" style="left:742px;top:419px;width:1133px;height:32px;background:linear-gradient(#f5f5f5 0,#f5f5f5 50%,#eeeeee 50%,#eeeeee 100%)"></div><svg class="a" style="left:0;top:0" width="1910" height="905" viewBox="0 0 1910 905"><line x1="742" y1="450.5" x2="1875" y2="450.5" stroke="#d8d8d8" stroke-width="1"/><line x1="742" y1="481.5" x2="1851.6" y2="481.5" stroke="#c4c4c4" stroke-width="1" stroke-dasharray="1 1"/><line x1="742" y1="512.5" x2="1851.6" y2="512.5" stroke="#c4c4c4" stroke-width="1" stroke-dasharray="1 1"/><line x1="742" y1="544.5" x2="1851.6" y2="544.5" stroke="#c4c4c4" stroke-width="1" stroke-dasharray="1 1"/><line x1="742" y1="575.5" x2="1851.6" y2="575.5" stroke="#c4c4c4" stroke-width="1" stroke-dasharray="1 1"/><line x1="742" y1="606.5" x2="1851.6" y2="606.5" stroke="#c4c4c4" stroke-width="1" stroke-dasharray="1 1"/><line x1="742" y1="637.5" x2="1851.6" y2="637.5" stroke="#c4c4c4" stroke-width="1" stroke-dasharray="1 1"/><line x1="742" y1="668.5" x2="1851.6" y2="668.5" stroke="#c4c4c4" stroke-width="1" stroke-dasharray="1 1"/><line x1="742" y1="699.5" x2="1851.6" y2="699.5" stroke="#c4c4c4" stroke-width="1" stroke-dasharray="1 1"/><line x1="742" y1="731.5" x2="1851.6" y2="731.5" stroke="#c4c4c4" stroke-width="1" stroke-dasharray="1 1"/><line x1="742" y1="762.5" x2="1851.6" y2="762.5" stroke="#c4c4c4" stroke-width="1" stroke-dasharray="1 1"/><line x1="742" y1="793.5" x2="1851.6" y2="793.5" stroke="#c4c4c4" stroke-width="1" stroke-dasharray="1 1"/><line x1="742" y1="824.5" x2="1851.6" y2="824.5" stroke="#c4c4c4" stroke-width="1" stroke-dasharray="1 1"/><line x1="742" y1="855.5" x2="1851.6" y2="855.5" stroke="#c4c4c4" stroke-width="1" stroke-dasharray="1 1"/><line x1="742" y1="886.5" x2="1851.6" y2="886.5" stroke="#c4c4c4" stroke-width="1" stroke-dasharray="1 1"/><line x1="851.5" y1="419" x2="851.5" y2="450.5" stroke="#c8c8c8" stroke-width="1" stroke-dasharray="1 1"/><line x1="851.5" y1="450.5" x2="851.5" y2="887" stroke="#c4c4c4" stroke-width="1" stroke-dasharray="1 1"/><line x1="961.5" y1="419" x2="961.5" y2="450.5" stroke="#c8c8c8" stroke-width="1" stroke-dasharray="1 1"/><line x1="961.5" y1="450.5" x2="961.5" y2="887" stroke="#c4c4c4" stroke-width="1" stroke-dasharray="1 1"/><line x1="1071.5" y1="419" x2="1071.5" y2="450.5" stroke="#c8c8c8" stroke-width="1" stroke-dasharray="1 1"/><line x1="1071.5" y1="450.5" x2="1071.5" y2="887" stroke="#c4c4c4" stroke-width="1" stroke-dasharray="1 1"/><line x1="1181.5" y1="419" x2="1181.5" y2="450.5" stroke="#c8c8c8" stroke-width="1" stroke-dasharray="1 1"/><line x1="1181.5" y1="450.5" x2="1181.5" y2="887" stroke="#c4c4c4" stroke-width="1" stroke-dasharray="1 1"/><line x1="1291.5" y1="419" x2="1291.5" y2="450.5" stroke="#c8c8c8" stroke-width="1" stroke-dasharray="1 1"/><line x1="1291.5" y1="450.5" x2="1291.5" y2="887" stroke="#c4c4c4" stroke-width="1" stroke-dasharray="1 1"/><line x1="1401.5" y1="419" x2="1401.5" y2="450.5" stroke="#c8c8c8" stroke-width="1" stroke-dasharray="1 1"/><line x1="1401.5" y1="450.5" x2="1401.5" y2="887" stroke="#c4c4c4" stroke-width="1" stroke-dasharray="1 1"/><line x1="1511.5" y1="419" x2="1511.5" y2="450.5" stroke="#c8c8c8" stroke-width="1" stroke-dasharray="1 1"/><line x1="1511.5" y1="450.5" x2="1511.5" y2="887" stroke="#c4c4c4" stroke-width="1" stroke-dasharray="1 1"/><line x1="1621.5" y1="419" x2="1621.5" y2="450.5" stroke="#c8c8c8" stroke-width="1" stroke-dasharray="1 1"/><line x1="1621.5" y1="450.5" x2="1621.5" y2="887" stroke="#c4c4c4" stroke-width="1" stroke-dasharray="1 1"/><line x1="1731.5" y1="419" x2="1731.5" y2="450.5" stroke="#c8c8c8" stroke-width="1" stroke-dasharray="1 1"/><line x1="1731.5" y1="450.5" x2="1731.5" y2="887" stroke="#c4c4c4" stroke-width="1" stroke-dasharray="1 1"/><line x1="1851.5" y1="419" x2="1851.5" y2="450.5" stroke="#c8c8c8" stroke-width="1" stroke-dasharray="1 1"/><line x1="1851.5" y1="450.5" x2="1851.5" y2="887" stroke="#c4c4c4" stroke-width="1" stroke-dasharray="1 1"/><line x1="742" y1="438.5" x2="1875" y2="438.5" stroke="#fff" stroke-width="1" stroke-dasharray="1 1"/></svg><div class="a" style="left:746.8px;top:425px;font-size:15px;line-height:18px;color:#333;white-space:nowrap">客服/操作</div><div class="a" style="left:856.4px;top:425px;font-size:15px;line-height:18px;color:#333;white-space:nowrap">负责客户</div><div class="a" style="left:966.3px;top:425px;font-size:15px;line-height:18px;color:#333;white-space:nowrap">进行中订单</div><div class="a" style="left:1076.3px;top:425px;font-size:15px;line-height:18px;color:#333;white-space:nowrap">已下单</div><div class="a" style="left:1186.1px;top:425px;font-size:15px;line-height:18px;color:#333;white-space:nowrap">已收货</div><div class="a" style="left:1296.3px;top:425px;font-size:15px;line-height:18px;color:#333;white-space:nowrap">转运中</div><div class="a" style="left:1406.3px;top:425px;font-size:15px;line-height:18px;color:#333;white-space:nowrap">已签收</div><div class="a" style="left:1516.2px;top:425px;font-size:15px;line-height:18px;color:#333;white-space:nowrap">销售额</div><div class="a" style="left:1626.0px;top:425px;font-size:15px;line-height:18px;color:#333;white-space:nowrap">货量（CBM)</div><div class="a" style="left:1736.2px;top:425px;font-size:15px;line-height:18px;color:#333;white-space:nowrap">未收款</div><div class="a" style="left:746.8px;top:456.0px;font-size:15px;line-height:18px;color:#222;white-space:nowrap">收货公司</div><div class="a" style="left:856.4px;top:456.0px;font-size:15px;line-height:18px;color:#222;white-space:nowrap">6</div><div class="a" style="left:966.3px;top:456.0px;font-size:15px;line-height:18px;color:#222;white-space:nowrap">17</div><div class="a" style="left:1076.3px;top:456.0px;font-size:15px;line-height:18px;color:#222;white-space:nowrap">11</div><div class="a" style="left:1186.1px;top:456.0px;font-size:15px;line-height:18px;color:#222;white-space:nowrap">3</div><div class="a" style="left:1296.3px;top:456.0px;font-size:15px;line-height:18px;color:#222;white-space:nowrap">3</div><div class="a" style="left:1406.3px;top:456.0px;font-size:15px;line-height:18px;color:#222;white-space:nowrap">1</div><div class="a" style="left:1516.2px;top:456.0px;font-size:15px;line-height:18px;color:#222;white-space:nowrap">29224</div><div class="a" style="left:1626.0px;top:456.0px;font-size:15px;line-height:18px;color:#222;white-space:nowrap">18.819</div><div class="a" style="left:1736.2px;top:456.0px;font-size:15px;line-height:18px;color:#222;white-space:nowrap">29224</div>
<div class="a" style="left:746.8px;top:487.1px;font-size:15px;line-height:18px;color:#222;white-space:nowrap">冯先生</div><div class="a" style="left:856.4px;top:487.1px;font-size:15px;line-height:18px;color:#222;white-space:nowrap">2</div><div class="a" style="left:966.3px;top:487.1px;font-size:15px;line-height:18px;color:#222;white-space:nowrap">3</div><div class="a" style="left:1076.3px;top:487.1px;font-size:15px;line-height:18px;color:#222;white-space:nowrap">3</div><div class="a" style="left:1186.1px;top:487.1px;font-size:15px;line-height:18px;color:#222;white-space:nowrap">0</div><div class="a" style="left:1296.3px;top:487.1px;font-size:15px;line-height:18px;color:#222;white-space:nowrap">0</div><div class="a" style="left:1406.3px;top:487.1px;font-size:15px;line-height:18px;color:#222;white-space:nowrap">0</div><div class="a" style="left:1516.2px;top:487.1px;font-size:15px;line-height:18px;color:#222;white-space:nowrap">0</div><div class="a" style="left:1736.2px;top:487.1px;font-size:15px;line-height:18px;color:#222;white-space:nowrap">0</div>
<div class="a" style="left:746.8px;top:518.3px;font-size:15px;line-height:18px;color:#222;white-space:nowrap">杨竟富</div><div class="a" style="left:856.4px;top:518.3px;font-size:15px;line-height:18px;color:#222;white-space:nowrap">2</div><div class="a" style="left:966.3px;top:518.3px;font-size:15px;line-height:18px;color:#222;white-space:nowrap">2</div><div class="a" style="left:1076.3px;top:518.3px;font-size:15px;line-height:18px;color:#222;white-space:nowrap">1</div><div class="a" style="left:1186.1px;top:518.3px;font-size:15px;line-height:18px;color:#222;white-space:nowrap">0</div><div class="a" style="left:1296.3px;top:518.3px;font-size:15px;line-height:18px;color:#222;white-space:nowrap">0</div><div class="a" style="left:1406.3px;top:518.3px;font-size:15px;line-height:18px;color:#222;white-space:nowrap">0</div><div class="a" style="left:1516.2px;top:518.3px;font-size:15px;line-height:18px;color:#222;white-space:nowrap">1388</div><div class="a" style="left:1626.0px;top:518.3px;font-size:15px;line-height:18px;color:#222;white-space:nowrap">0.741</div><div class="a" style="left:1736.2px;top:518.3px;font-size:15px;line-height:18px;color:#222;white-space:nowrap">1388</div>
<div class="a" style="left:746.8px;top:549.5px;font-size:15px;line-height:18px;color:#222;white-space:nowrap">bin</div><div class="a" style="left:856.4px;top:549.5px;font-size:15px;line-height:18px;color:#222;white-space:nowrap">1</div><div class="a" style="left:966.3px;top:549.5px;font-size:15px;line-height:18px;color:#222;white-space:nowrap">2</div><div class="a" style="left:1076.3px;top:549.5px;font-size:15px;line-height:18px;color:#222;white-space:nowrap">2</div><div class="a" style="left:1186.1px;top:549.5px;font-size:15px;line-height:18px;color:#222;white-space:nowrap">0</div><div class="a" style="left:1296.3px;top:549.5px;font-size:15px;line-height:18px;color:#222;white-space:nowrap">0</div><div class="a" style="left:1406.3px;top:549.5px;font-size:15px;line-height:18px;color:#222;white-space:nowrap">0</div><div class="a" style="left:1516.2px;top:549.5px;font-size:15px;line-height:18px;color:#222;white-space:nowrap">13530</div><div class="a" style="left:1626.0px;top:549.5px;font-size:15px;line-height:18px;color:#222;white-space:nowrap">0.2242</div><div class="a" style="left:1736.2px;top:549.5px;font-size:15px;line-height:18px;color:#222;white-space:nowrap">11030</div>
<div class="a" style="left:746.8px;top:580.6px;font-size:15px;line-height:18px;color:#222;white-space:nowrap">Morelink</div><div class="a" style="left:856.4px;top:580.6px;font-size:15px;line-height:18px;color:#222;white-space:nowrap">1</div><div class="a" style="left:966.3px;top:580.6px;font-size:15px;line-height:18px;color:#222;white-space:nowrap">1</div><div class="a" style="left:1076.3px;top:580.6px;font-size:15px;line-height:18px;color:#222;white-space:nowrap">0</div><div class="a" style="left:1186.1px;top:580.6px;font-size:15px;line-height:18px;color:#222;white-space:nowrap">1</div><div class="a" style="left:1296.3px;top:580.6px;font-size:15px;line-height:18px;color:#222;white-space:nowrap">0</div><div class="a" style="left:1406.3px;top:580.6px;font-size:15px;line-height:18px;color:#222;white-space:nowrap">0</div><div class="a" style="left:1516.2px;top:580.6px;font-size:15px;line-height:18px;color:#222;white-space:nowrap">1000</div><div class="a" style="left:1626.0px;top:580.6px;font-size:15px;line-height:18px;color:#222;white-space:nowrap">1.0959</div><div class="a" style="left:1736.2px;top:580.6px;font-size:15px;line-height:18px;color:#222;white-space:nowrap">0</div>
<div class="a" style="left:746.8px;top:611.8px;font-size:15px;line-height:18px;color:#222;white-space:nowrap">morelink测试号</div><div class="a" style="left:856.4px;top:611.8px;font-size:15px;line-height:18px;color:#222;white-space:nowrap">1</div><div class="a" style="left:966.3px;top:611.8px;font-size:15px;line-height:18px;color:#222;white-space:nowrap">1</div><div class="a" style="left:1076.3px;top:611.8px;font-size:15px;line-height:18px;color:#222;white-space:nowrap">0</div><div class="a" style="left:1186.1px;top:611.8px;font-size:15px;line-height:18px;color:#222;white-space:nowrap">1</div><div class="a" style="left:1296.3px;top:611.8px;font-size:15px;line-height:18px;color:#222;white-space:nowrap">0</div><div class="a" style="left:1406.3px;top:611.8px;font-size:15px;line-height:18px;color:#222;white-space:nowrap">0</div><div class="a" style="left:1516.2px;top:611.8px;font-size:15px;line-height:18px;color:#222;white-space:nowrap">1000</div><div class="a" style="left:1626.0px;top:611.8px;font-size:15px;line-height:18px;color:#222;white-space:nowrap">1.0959</div><div class="a" style="left:1736.2px;top:611.8px;font-size:15px;line-height:18px;color:#222;white-space:nowrap">0</div>
<div class="a" style="left:746.8px;top:642.9px;font-size:15px;line-height:18px;color:#222;white-space:nowrap">阿轩测试</div><div class="a" style="left:856.4px;top:642.9px;font-size:15px;line-height:18px;color:#222;white-space:nowrap">1</div><div class="a" style="left:966.3px;top:642.9px;font-size:15px;line-height:18px;color:#222;white-space:nowrap">3</div><div class="a" style="left:1076.3px;top:642.9px;font-size:15px;line-height:18px;color:#222;white-space:nowrap">3</div><div class="a" style="left:1186.1px;top:642.9px;font-size:15px;line-height:18px;color:#222;white-space:nowrap">0</div><div class="a" style="left:1296.3px;top:642.9px;font-size:15px;line-height:18px;color:#222;white-space:nowrap">0</div><div class="a" style="left:1406.3px;top:642.9px;font-size:15px;line-height:18px;color:#222;white-space:nowrap">0</div><div class="a" style="left:1516.2px;top:642.9px;font-size:15px;line-height:18px;color:#222;white-space:nowrap">0</div><div class="a" style="left:1736.2px;top:642.9px;font-size:15px;line-height:18px;color:#222;white-space:nowrap">0</div>
<div class="a" style="left:746.8px;top:674.0px;font-size:15px;line-height:18px;color:#222;white-space:nowrap">测试账号</div><div class="a" style="left:856.4px;top:674.0px;font-size:15px;line-height:18px;color:#222;white-space:nowrap">1</div><div class="a" style="left:966.3px;top:674.0px;font-size:15px;line-height:18px;color:#222;white-space:nowrap">1</div><div class="a" style="left:1076.3px;top:674.0px;font-size:15px;line-height:18px;color:#222;white-space:nowrap">0</div><div class="a" style="left:1186.1px;top:674.0px;font-size:15px;line-height:18px;color:#222;white-space:nowrap">0</div><div class="a" style="left:1296.3px;top:674.0px;font-size:15px;line-height:18px;color:#222;white-space:nowrap">0</div><div class="a" style="left:1406.3px;top:674.0px;font-size:15px;line-height:18px;color:#222;white-space:nowrap">0</div><div class="a" style="left:1516.2px;top:674.0px;font-size:15px;line-height:18px;color:#222;white-space:nowrap">1300</div><div class="a" style="left:1626.0px;top:674.0px;font-size:15px;line-height:18px;color:#222;white-space:nowrap">0.741</div><div class="a" style="left:1736.2px;top:674.0px;font-size:15px;line-height:18px;color:#222;white-space:nowrap">1300</div>
<div class="a" style="left:746.8px;top:705.2px;font-size:15px;line-height:18px;color:#222;white-space:nowrap">陈源2</div><div class="a" style="left:856.4px;top:705.2px;font-size:15px;line-height:18px;color:#222;white-space:nowrap">1</div><div class="a" style="left:966.3px;top:705.2px;font-size:15px;line-height:18px;color:#222;white-space:nowrap">1</div><div class="a" style="left:1076.3px;top:705.2px;font-size:15px;line-height:18px;color:#222;white-space:nowrap">1</div><div class="a" style="left:1186.1px;top:705.2px;font-size:15px;line-height:18px;color:#222;white-space:nowrap">0</div><div class="a" style="left:1296.3px;top:705.2px;font-size:15px;line-height:18px;color:#222;white-space:nowrap">0</div><div class="a" style="left:1406.3px;top:705.2px;font-size:15px;line-height:18px;color:#222;white-space:nowrap">0</div><div class="a" style="left:1516.2px;top:705.2px;font-size:15px;line-height:18px;color:#222;white-space:nowrap">88</div><div class="a" style="left:1736.2px;top:705.2px;font-size:15px;line-height:18px;color:#222;white-space:nowrap">88</div>
<div class="a" style="left:746.8px;top:736.3px;font-size:15px;line-height:18px;color:#222;white-space:nowrap">诺小生</div><div class="a" style="left:856.4px;top:736.3px;font-size:15px;line-height:18px;color:#222;white-space:nowrap">1</div><div class="a" style="left:966.3px;top:736.3px;font-size:15px;line-height:18px;color:#222;white-space:nowrap">1</div><div class="a" style="left:1076.3px;top:736.3px;font-size:15px;line-height:18px;color:#222;white-space:nowrap">0</div><div class="a" style="left:1186.1px;top:736.3px;font-size:15px;line-height:18px;color:#222;white-space:nowrap">0</div><div class="a" style="left:1296.3px;top:736.3px;font-size:15px;line-height:18px;color:#222;white-space:nowrap">1</div><div class="a" style="left:1406.3px;top:736.3px;font-size:15px;line-height:18px;color:#222;white-space:nowrap">0</div><div class="a" style="left:1516.2px;top:736.3px;font-size:15px;line-height:18px;color:#222;white-space:nowrap">242500</div><div class="a" style="left:1626.0px;top:736.3px;font-size:15px;line-height:18px;color:#222;white-space:nowrap">0.1</div><div class="a" style="left:1736.2px;top:736.3px;font-size:15px;line-height:18px;color:#222;white-space:nowrap">242500</div>
<div class="a" style="left:746.8px;top:767.5px;font-size:15px;line-height:18px;color:#222;white-space:nowrap">欧阳卫东</div><div class="a" style="left:856.4px;top:767.5px;font-size:15px;line-height:18px;color:#222;white-space:nowrap">1</div><div class="a" style="left:966.3px;top:767.5px;font-size:15px;line-height:18px;color:#222;white-space:nowrap">3</div><div class="a" style="left:1076.3px;top:767.5px;font-size:15px;line-height:18px;color:#222;white-space:nowrap">1</div><div class="a" style="left:1186.1px;top:767.5px;font-size:15px;line-height:18px;color:#222;white-space:nowrap">1</div><div class="a" style="left:1296.3px;top:767.5px;font-size:15px;line-height:18px;color:#222;white-space:nowrap">1</div><div class="a" style="left:1406.3px;top:767.5px;font-size:15px;line-height:18px;color:#222;white-space:nowrap">1</div><div class="a" style="left:1516.2px;top:767.5px;font-size:15px;line-height:18px;color:#222;white-space:nowrap">28500</div><div class="a" style="left:1626.0px;top:767.5px;font-size:15px;line-height:18px;color:#222;white-space:nowrap">0.1927</div><div class="a" style="left:1736.2px;top:767.5px;font-size:15px;line-height:18px;color:#222;white-space:nowrap">28500</div>
<div class="a" style="left:746.8px;top:798.6px;font-size:15px;line-height:18px;color:#222;white-space:nowrap">小谢业务</div><div class="a" style="left:856.4px;top:798.6px;font-size:15px;line-height:18px;color:#222;white-space:nowrap">1</div><div class="a" style="left:966.3px;top:798.6px;font-size:15px;line-height:18px;color:#222;white-space:nowrap">2</div><div class="a" style="left:1076.3px;top:798.6px;font-size:15px;line-height:18px;color:#222;white-space:nowrap">2</div><div class="a" style="left:1186.1px;top:798.6px;font-size:15px;line-height:18px;color:#222;white-space:nowrap">0</div><div class="a" style="left:1296.3px;top:798.6px;font-size:15px;line-height:18px;color:#222;white-space:nowrap">0</div><div class="a" style="left:1406.3px;top:798.6px;font-size:15px;line-height:18px;color:#222;white-space:nowrap">0</div><div class="a" style="left:1516.2px;top:798.6px;font-size:15px;line-height:18px;color:#222;white-space:nowrap">0</div><div class="a" style="left:1736.2px;top:798.6px;font-size:15px;line-height:18px;color:#222;white-space:nowrap">0</div>
<div class="a" style="left:746.8px;top:829.8px;font-size:15px;line-height:18px;color:#222;white-space:nowrap">谢嘉仪</div><div class="a" style="left:856.4px;top:829.8px;font-size:15px;line-height:18px;color:#222;white-space:nowrap">1</div><div class="a" style="left:966.3px;top:829.8px;font-size:15px;line-height:18px;color:#222;white-space:nowrap">5</div><div class="a" style="left:1076.3px;top:829.8px;font-size:15px;line-height:18px;color:#222;white-space:nowrap">5</div><div class="a" style="left:1186.1px;top:829.8px;font-size:15px;line-height:18px;color:#222;white-space:nowrap">0</div><div class="a" style="left:1296.3px;top:829.8px;font-size:15px;line-height:18px;color:#222;white-space:nowrap">0</div><div class="a" style="left:1406.3px;top:829.8px;font-size:15px;line-height:18px;color:#222;white-space:nowrap">0</div><div class="a" style="left:1516.2px;top:829.8px;font-size:15px;line-height:18px;color:#222;white-space:nowrap">120</div><div class="a" style="left:1736.2px;top:829.8px;font-size:15px;line-height:18px;color:#222;white-space:nowrap">120</div>
<div class="a" style="left:856.4px;top:861.0px;font-size:15px;line-height:18px;color:#222;white-space:nowrap">0</div><div class="a" style="left:966.3px;top:861.0px;font-size:15px;line-height:18px;color:#222;white-space:nowrap">0</div><div class="a" style="left:1076.3px;top:861.0px;font-size:15px;line-height:18px;color:#222;white-space:nowrap">0</div><div class="a" style="left:1186.1px;top:861.0px;font-size:15px;line-height:18px;color:#222;white-space:nowrap">0</div><div class="a" style="left:1296.3px;top:861.0px;font-size:15px;line-height:18px;color:#222;white-space:nowrap">0</div><div class="a" style="left:1406.3px;top:861.0px;font-size:15px;line-height:18px;color:#222;white-space:nowrap">0</div><div class="a" style="left:1516.2px;top:861.0px;font-size:15px;line-height:18px;color:#222;white-space:nowrap">0</div><div class="a" style="left:1736.2px;top:861.0px;font-size:15px;line-height:18px;color:#222;white-space:nowrap">0</div>

<!--/TABLE-->
<div class="a" id="scroll"></div>
<div class="a" id="bottombar"></div><div class="a" style="left:662px;top:905px;width:200px;height:3px;background:#525866"></div><div class="a" style="left:0;top:905px;width:1910px;height:1px;background:rgba(0,0,0,0.25)"></div>
</body></html>
